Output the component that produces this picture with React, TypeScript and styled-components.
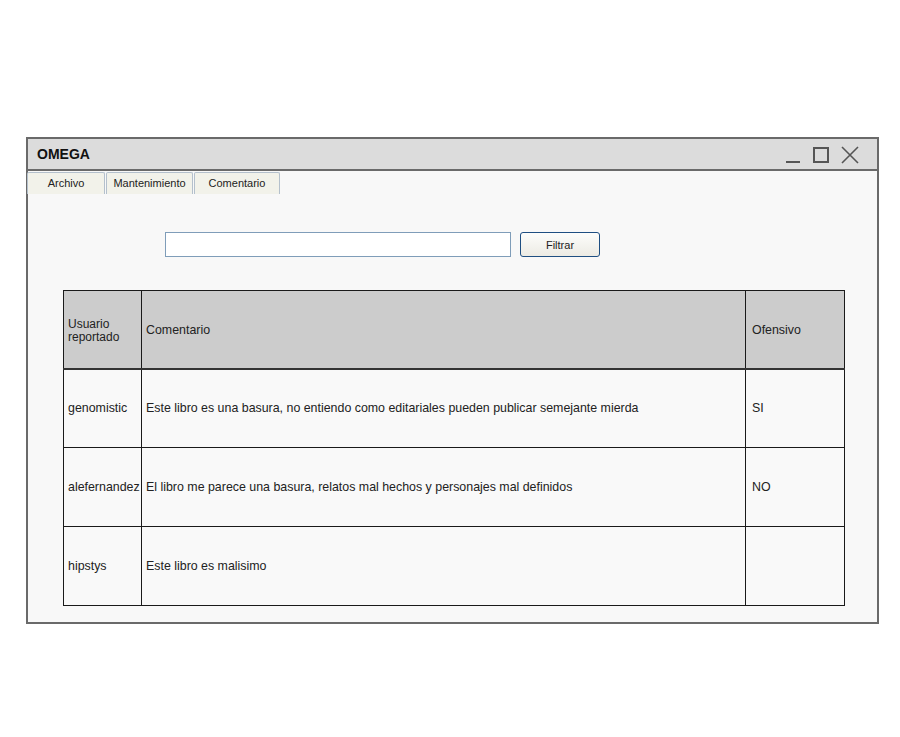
import React from "react";
import styled, { createGlobalStyle } from "styled-components";

const Global = createGlobalStyle`
  html, body { margin: 0; padding: 0; background: #ffffff; }
  body { font-family: "Liberation Sans", Arial, sans-serif; }
`;

const Page = styled.div`
  padding: 137px 0 0 26px;
  height: 737px;
  box-sizing: border-box;
`;

const Window = styled.div`
  width: 853px;
  height: 487px;
  box-sizing: border-box;
  border: 2px solid #6a6a6a;
  background: #f8f8f8;
  display: flex;
  flex-direction: column;
`;

const TitleBar = styled.div`
  height: 32px;
  box-sizing: border-box;
  border-bottom: 2px solid #6a6a6a;
  background: #dcdcdc;
  display: flex;
  align-items: center;
  justify-content: space-between;
  padding: 0 18px 0 9px;
`;

const Title = styled.div`
  font-family: "Liberation Sans", Arial, sans-serif;
  font-weight: bold;
  font-size: 14px;
  color: #111;
`;

const Controls = styled.div`
  display: flex;
  align-items: center;
  gap: 12px;
  margin-top: 2px;
`;

const TabRow = styled.div`
  display: flex;
  gap: 1px;
  height: 22px;
  padding-top: 1px;
  margin-left: -1px;
`;

const Tab = styled.div<{ $w: number }>`
  width: ${(p) => p.$w}px;
  box-sizing: border-box;
  background: #f2f2ea;
  border: 1px solid #b4c0cc;
  border-bottom: none;
  border-radius: 2px 2px 0 0;
  font-family: "Liberation Sans", Arial, sans-serif;
  font-size: 11px;
  color: #222;
  display: flex;
  align-items: center;
  justify-content: center;
  padding-bottom: 2px;
`;

const Content = styled.div`
  flex: 1;
  padding: 38px 0 0 35px;
  display: flex;
  flex-direction: column;
`;

const FilterRow = styled.div`
  display: flex;
  align-items: center;
  gap: 9px;
  padding-left: 102px;
`;

const SearchInput = styled.input`
  width: 346px;
  height: 25px;
  box-sizing: border-box;
  border: 1px solid #7f9db9;
  background: #fff;
  outline: none;
  margin: 0;
`;

const FilterButton = styled.button`
  width: 80px;
  height: 25px;
  box-sizing: border-box;
  border: 1px solid #1f4f82;
  border-radius: 3px;
  background: linear-gradient(#fdfdfb, #ecebe4);
  font-family: "Liberation Sans", Arial, sans-serif;
  font-size: 11px;
  color: #222;
  padding: 0;
  margin: 0;
`;

const Table = styled.table`
  margin-top: 33px;
  width: 781px;
  border-collapse: collapse;
  table-layout: fixed;
  font-family: "Liberation Sans", Arial, sans-serif;
  font-size: 12.4px;
  color: #222;
`;

const HeadCell = styled.th<{ $pad?: number }>`
  height: 78px;
  background: #cccccc;
  border: 1px solid #1a1a1a;
  border-bottom: 2px solid #333;
  text-align: left;
  font-weight: normal;
  padding: 3px 0 0 ${(p) => p.$pad ?? 4}px;
  box-sizing: border-box;
  line-height: 13px;
  vertical-align: middle;
`;

const HeadLine = styled.span`
  display: block;
  font-size: 12px;
  line-height: 12.5px;
`;

const Cell = styled.td<{ $pad?: number }>`
  height: 77.7px;
  background: #f9f9f9;
  border: 1px solid #1a1a1a;
  padding: 0 0 0 ${(p) => p.$pad ?? 4}px;
  vertical-align: middle;
  white-space: nowrap;
  overflow: hidden;
`;

const rows = [
  {
    user: "genomistic",
    comment:
      "Este libro es una basura, no entiendo como editariales pueden publicar semejante mierda",
    off: "SI",
  },
  {
    user: "alefernandez",
    comment:
      "El libro me parece una basura, relatos mal hechos y personajes mal definidos",
    off: "NO",
  },
  { user: "hipstys", comment: "Este libro es malisimo", off: "" },
];

export default function App() {
  return (
    <>
      <Global />
      <Page>
        <Window>
          <TitleBar>
            <Title>OMEGA</Title>
            <Controls>
              <svg width="16" height="16" viewBox="0 0 16 16">
                <line x1="1" y1="15" x2="15" y2="15" stroke="#555" strokeWidth="2" />
              </svg>
              <svg width="16" height="16" viewBox="0 0 16 16">
                <rect x="1" y="1" width="14" height="14" fill="none" stroke="#555" strokeWidth="2" />
              </svg>
              <svg width="18" height="18" viewBox="0 0 18 18">
                <path d="M1 1 L17 17 M17 1 L1 17" stroke="#555" strokeWidth="1.6" />
              </svg>
            </Controls>
          </TitleBar>
          <TabRow>
            <Tab $w={78}>Archivo</Tab>
            <Tab $w={87}>Mantenimiento</Tab>
            <Tab $w={86}>Comentario</Tab>
          </TabRow>
          <Content>
            <FilterRow>
              <SearchInput />
              <FilterButton>Filtrar</FilterButton>
            </FilterRow>
            <Table>
              <colgroup>
                <col style={{ width: 78 }} />
                <col style={{ width: 604 }} />
                <col style={{ width: 99 }} />
              </colgroup>
              <thead>
                <tr>
                  <HeadCell>
                    <HeadLine>Usuario</HeadLine>
                    <HeadLine>reportado</HeadLine>
                  </HeadCell>
                  <HeadCell>Comentario</HeadCell>
                  <HeadCell $pad={6}>Ofensivo</HeadCell>
                </tr>
              </thead>
              <tbody>
                {rows.map((r) => (
                  <tr key={r.user}>
                    <Cell>{r.user}</Cell>
                    <Cell>{r.comment}</Cell>
                    <Cell $pad={6}>{r.off}</Cell>
                  </tr>
                ))}
              </tbody>
            </Table>
          </Content>
        </Window>
      </Page>
    </>
  );
}
